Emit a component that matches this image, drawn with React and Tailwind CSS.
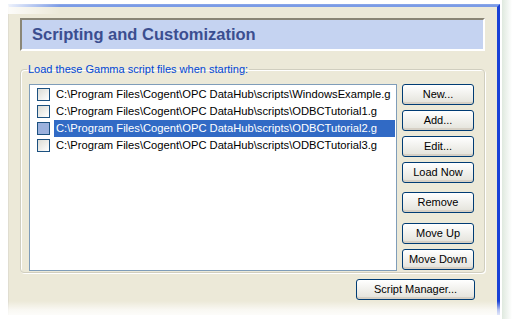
const files = [
  "C:\\Program Files\\Cogent\\OPC DataHub\\scripts\\WindowsExample.g",
  "C:\\Program Files\\Cogent\\OPC DataHub\\scripts\\ODBCTutorial1.g",
  "C:\\Program Files\\Cogent\\OPC DataHub\\scripts\\ODBCTutorial2.g",
  "C:\\Program Files\\Cogent\\OPC DataHub\\scripts\\ODBCTutorial3.g",
];

const XpButton = ({ children, className = "" }) => (
  <button
    className={`h-[21px] rounded-[3px] border border-[#003c74] bg-gradient-to-b from-white to-[#e3e2da] text-[11px] text-black leading-none shadow-[inset_0_-2px_0_#d6d0c5] ${className}`}
  >
    {children}
  </button>
);

const App = () => {
  return (
    <div
      className="relative w-[512px] h-[319px] overflow-hidden bg-white pl-[8px] pt-[4px]"
      style={{ fontFamily: '"Liberation Sans", Arial, sans-serif' }}
    >
      {/* window body */}
      <div className="relative w-[492px] h-[311px] bg-[#ece9d8] border-t-[3px] border-t-[#7b9be6] border-r-[3px] border-r-[#1941d6] border-l border-l-[#e0ddd0] pl-[11px] pr-[9px] pt-[11px]">
        {/* header */}
        <div className="h-[33px] w-[465px] border-2 border-t-[#8a8676] border-l-[#8a8676] border-r-white border-b-white bg-[#c5d3f1] pl-[10px] flex items-center">
          <span className="text-[16.5px] font-bold text-[#3b4e90]">Scripting and Customization</span>
        </div>

        {/* group box */}
        <fieldset className="mt-[12px] w-[465px] h-[210px] rounded-[4px] border border-[#d0cebf] shadow-[inset_1px_1px_0_white,1px_1px_0_white] p-0">
          <legend className="ml-[6px] px-[1px] text-[11px] text-[#0046d5] leading-[13px]">
            Load these Gamma script files when starting:
          </legend>
          <div className="flex gap-[5px] mt-[8px] pl-[8px]">
            <div className="w-[368px] h-[187px] border border-[#7f9db9] bg-white pt-[1px] pl-[7px] pr-[1px]">
              {files.map((f, i) => {
                const sel = i === 2;
                return (
                  <div key={f} className="h-[17px] flex items-center">
                    <div
                      className={`w-[13px] h-[13px] border border-[#1c5180] ${
                        sel ? "bg-[#9bb1dd]" : "bg-gradient-to-br from-[#dcdcd5] to-white"
                      }`}
                    />
                    <div
                      className={`ml-[4px] h-[17px] flex-1 flex items-center pl-[2px] text-[11.2px] ${
                        sel ? "bg-[#316ac5] text-white" : "text-black"
                      }`}
                    >
                      {f}
                    </div>
                  </div>
                );
              })}
            </div>
            <div className="flex flex-col w-[72px]">
              <XpButton>New...</XpButton>
              <XpButton className="mt-[5px]">Add...</XpButton>
              <XpButton className="mt-[5px]">Edit...</XpButton>
              <XpButton className="mt-[5px]">Load Now</XpButton>
              <XpButton className="mt-[9px]">Remove</XpButton>
              <XpButton className="mt-[10px]">Move Up</XpButton>
              <XpButton className="mt-[5px]">Move Down</XpButton>
            </div>
          </div>
        </fieldset>

        <div className="flex justify-end w-[465px] pr-[10px] mt-[6px]">
          <XpButton className="w-[119px]">Script Manager...</XpButton>
        </div>
      </div>

      {/* faded edges of the captured window */}
      <div className="pointer-events-none absolute left-0 top-0 w-[60px] h-[14px] bg-gradient-to-r from-white to-transparent" />
      <div className="pointer-events-none absolute left-0 top-0 w-[512px] h-[5px] bg-gradient-to-b from-white to-transparent" />
      <div className="pointer-events-none absolute left-0 bottom-0 w-[512px] h-[18px] bg-gradient-to-t from-white via-white/70 to-transparent" />
      <div className="pointer-events-none absolute right-0 top-0 w-[10px] h-[319px] bg-gradient-to-r from-[#dfe9df] to-white" />
    </div>
  );
};

export default App;
